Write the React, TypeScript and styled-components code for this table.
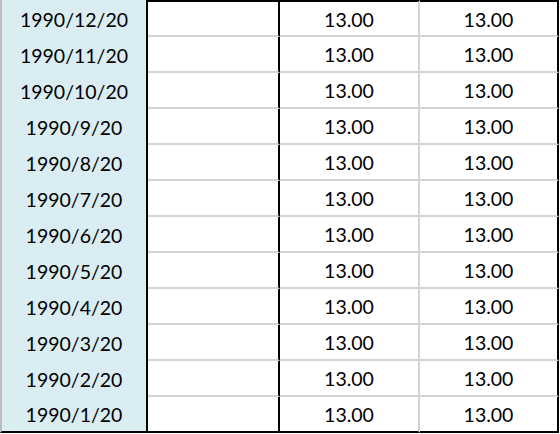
import styled, { createGlobalStyle } from 'styled-components'

const GlobalStyle = createGlobalStyle`
  html, body {
    margin: 0;
    padding: 0;
    background: #ffffff;
  }
  body {
    font-family: Lato, "Open Sans", sans-serif;
    color: #000000;
  }
`

const Sheet = styled.div`
  display: flex;
  flex-direction: column;
  width: 559px;
`

const Row = styled.div`
  display: flex;
  flex-direction: row;
`

const Cell = styled.div<{ $first: boolean; $last: boolean; $width: number; $edge: 'dark' | 'light' }>`
  box-sizing: border-box;
  width: ${({ $width }) => $width}px;
  height: ${({ $first }) => ($first ? 37 : 36)}px;
  display: flex;
  align-items: center;
  justify-content: center;
  padding-top: 1px;
  font-size: 19.5px;
  border-top: ${({ $first }) => ($first ? '2px solid #000' : 'none')};
  border-bottom: 2px solid ${({ $last }) => ($last ? '#000' : '#d4d4d4')};
  border-right: 2px solid ${({ $edge }) => ($edge === 'dark' ? '#000' : '#d4d4d4')};
`

const DateCell = styled(Cell)`
  background: #daedf3;
  border-left: 2px solid #bcbcbc;
  border-top: none;
  border-bottom: ${({ $last }) => ($last ? '2px solid #000' : 'none')};
`

const rows = [12, 11, 10, 9, 8, 7, 6, 5, 4, 3, 2, 1].map((m) => ({
  date: `1990/${m}/20`,
  a: '13.00',
  b: '13.00',
}))

const App = () => {
  return (
    <>
      <GlobalStyle />
      <Sheet>
        {rows.map((row, index) => {
          const first = index === 0
          const last = index === rows.length - 1
          return (
            <Row key={row.date}>
              <DateCell $first={first} $last={last} $width={148} $edge="dark">
                {row.date}
              </DateCell>
              <Cell $first={first} $last={last} $width={132} $edge="dark" />
              <Cell $first={first} $last={last} $width={140} $edge="light">
                {row.a}
              </Cell>
              <Cell $first={first} $last={last} $width={139} $edge="dark">
                {row.b}
              </Cell>
            </Row>
          )
        })}
      </Sheet>
    </>
  )
}

export default App
